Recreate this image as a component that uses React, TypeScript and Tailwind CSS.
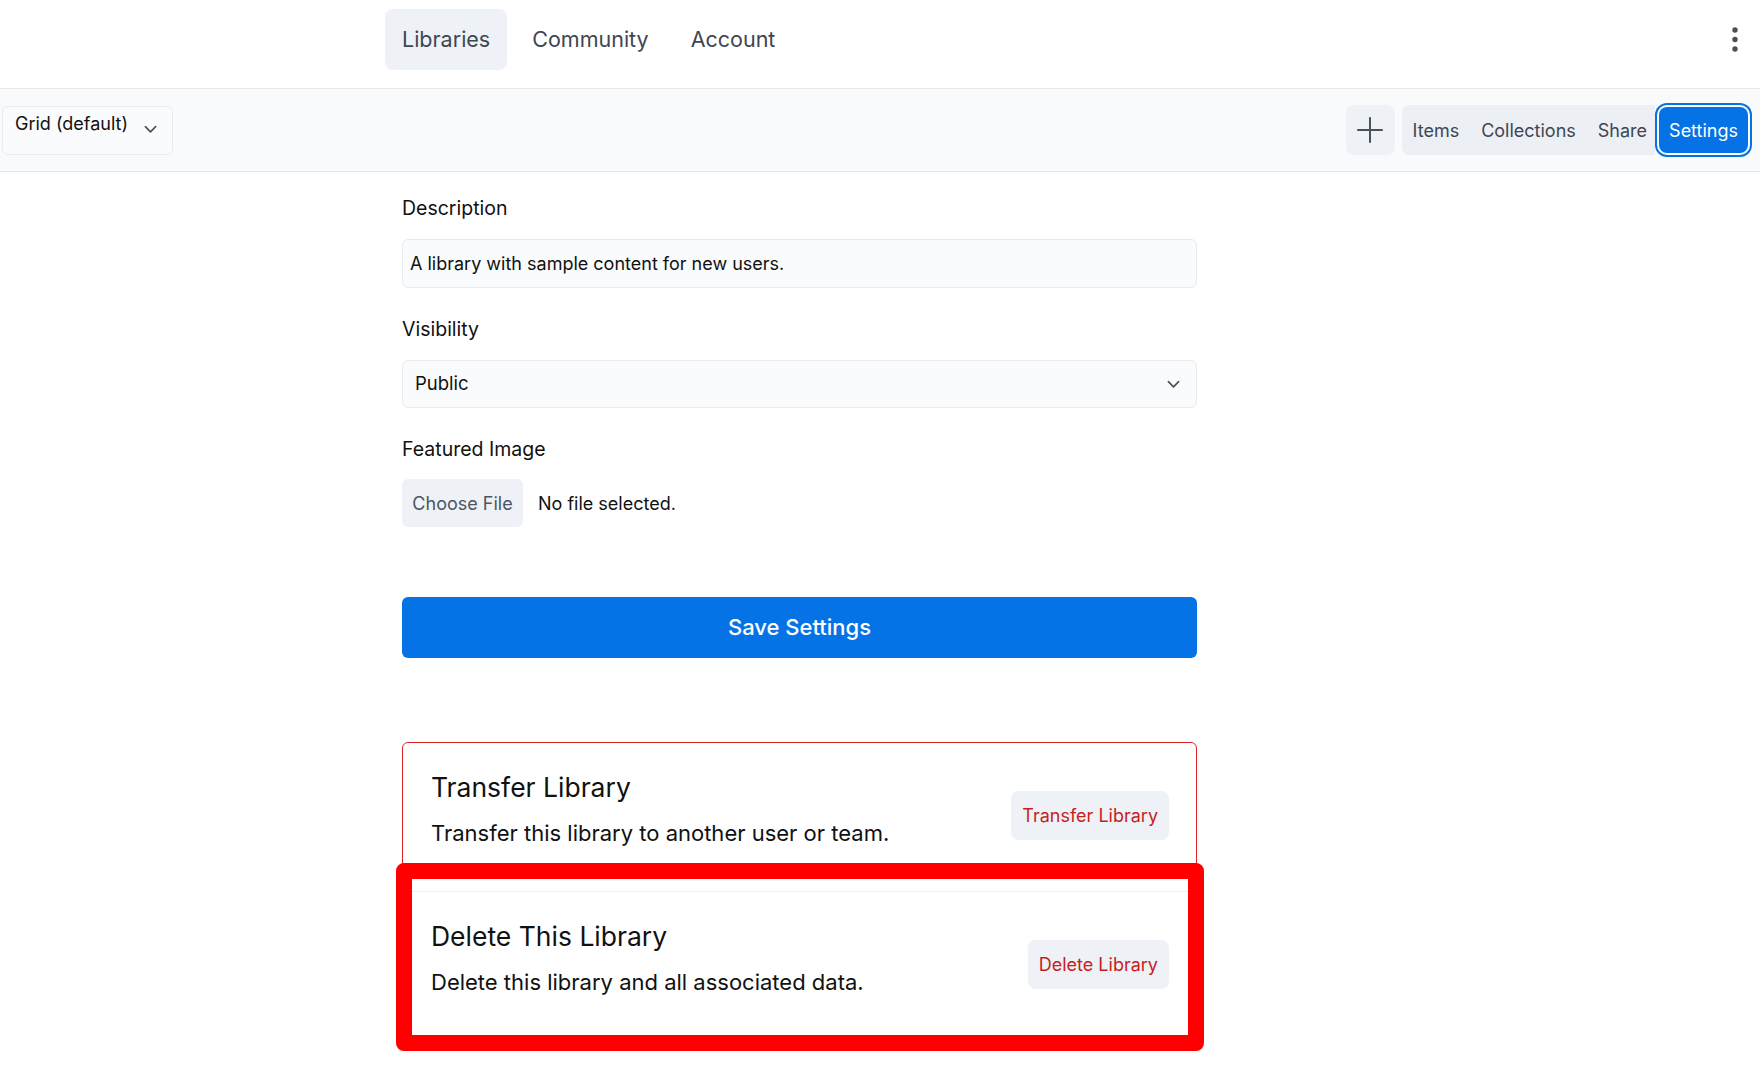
import React from "react";

const navItems = ["Libraries", "Community", "Account"];

const Chevron = ({ className }: { className?: string }) => (
  <svg viewBox="0 0 14 9" className={className} fill="none" stroke="currentColor" strokeWidth="1.8" strokeLinecap="round" strokeLinejoin="round">
    <path d="M1.5 1.5 7 7l5.5-5.5" />
  </svg>
);

const DangerRow = ({ title, text, action }: { title: string; text: string; action: string }) => (
  <div className="flex items-start justify-between">
    <div>
      <h3 className="text-[26.5px] leading-[32px] text-[#111111]">{title}</h3>
      <p className="mt-[16px] text-[22px] leading-[28px] text-[#111111]">{text}</p>
    </div>
    <button className="mt-[20px] h-[49px] rounded-lg bg-[#eef1f5] px-[11px] text-[18px] text-[#c81e1e]">{action}</button>
  </div>
);

export default function App() {
  return (
    <div className="relative min-h-screen bg-white font-['Inter',sans-serif] text-[#111111]">
      {/* top nav */}
      <header className="flex h-[89px] items-start border-b border-[#e5e7eb]">
        <nav className="ml-[385px] mt-[9px] flex gap-[8px]">
          {navItems.map((item, i) => (
            <button
              key={item}
              className={`h-[61px] rounded-lg px-[17px] text-[21.5px] text-[#3f4652] ${i === 0 ? "bg-[#eef2f7]" : ""}`}
            >
              {item}
            </button>
          ))}
        </nav>
        <button className="ml-auto mr-[21px] mt-[26px] text-[#4b5058]">
          <svg viewBox="0 0 8 28" className="h-[28px] w-[8px]" fill="currentColor">
            <circle cx="4" cy="4" r="2.7" />
            <circle cx="4" cy="13.5" r="2.7" />
            <circle cx="4" cy="23" r="2.7" />
          </svg>
        </button>
      </header>

      {/* toolbar */}
      <div className="flex h-[83px] items-center border-b border-[#e5e7eb] bg-[#f9fafb] pl-[2px] pr-[12px]">
        <div className="flex h-[49px] w-[171px] items-start rounded-md border border-[#e8ebef] bg-[#fafbfc] pl-[12px] pt-[4px]">
          <span className="text-[18px] leading-[26px]">Grid (default)</span>
          <Chevron className="ml-[16px] mt-[14px] h-[9px] w-[13px] text-[#4b5058]" />
        </div>
        <div className="ml-auto flex items-center">
          <button className="flex h-[50px] w-[49px] items-center justify-center rounded-lg bg-[#eef1f5] text-[#4b5058]">
            <svg viewBox="0 0 26 26" className="h-[26px] w-[26px]" fill="none" stroke="currentColor" strokeWidth="2" strokeLinecap="round">
              <path d="M13 1v24M1 13h24" />
            </svg>
          </button>
          <div className="ml-[7px] flex h-[50px] items-center rounded-l-lg bg-[#eceff4] text-[18px] text-[#3f4652]">
            <button className="h-full px-[11px]">Items</button>
            <button className="h-full px-[11px]">Collections</button>
            <button className="h-full pl-[11px] pr-[8px]">Share</button>
          </div>
          <button className="ml-[4px] h-[46px] rounded-lg bg-[#0573e5] px-[10px] text-[18px] text-white ring-2 ring-[#0573e5] ring-offset-2 ring-offset-white">
            Settings
          </button>
        </div>
      </div>

      {/* settings form */}
      <main className="ml-[402px] w-[795px] pb-10 pt-[22px]">
        <label className="block text-[19.5px] leading-[28px]">Description</label>
        <div className="mt-[17px] flex h-[49px] items-center rounded-md border border-[#e7eaee] bg-[#fafbfc] px-[7px] text-[18px]">
          A library with sample content for new users.
        </div>

        <label className="mt-[27px] block text-[19.5px] leading-[28px]">Visibility</label>
        <div className="mt-[17px] flex h-[48px] items-center justify-between rounded-md border border-[#e7eaee] bg-[#fafbfc] pl-[12px] pr-[16px] text-[18.5px]">
          <span>Public</span>
          <Chevron className="h-[9px] w-[13px] text-[#4b5058]" />
        </div>

        <label className="mt-[27px] block text-[19.5px] leading-[28px]">Featured Image</label>
        <div className="mt-[16px] flex items-center">
          <button className="h-[48px] w-[121px] rounded-md bg-[#eef1f5] text-[18px] text-[#4b5563]">Choose File</button>
          <span className="ml-[15px] text-[18px]">No file selected.</span>
        </div>

        <button className="mt-[70px] h-[61px] w-full rounded-md bg-[#0573e5] text-[22px] font-medium text-white">
          Save Settings
        </button>

        <div className="mt-[84px] rounded-md border border-[#dc2626]">
          <div className="pb-[44px] pl-[28px] pr-[27px] pt-[28px]">
            <DangerRow title="Transfer Library" text="Transfer this library to another user or team." action="Transfer Library" />
          </div>
          <div className="border-t border-[#edf0f3] pb-[41px] pl-[28px] pr-[27px] pt-[28px]">
            <DangerRow title="Delete This Library" text="Delete this library and all associated data." action="Delete Library" />
          </div>
        </div>
      </main>

      {/* annotation highlight */}
      <div className="pointer-events-none absolute left-[396px] top-[863px] h-[188px] w-[808px] rounded-lg border-[16px] border-[#ff0000]" />
    </div>
  );
}
